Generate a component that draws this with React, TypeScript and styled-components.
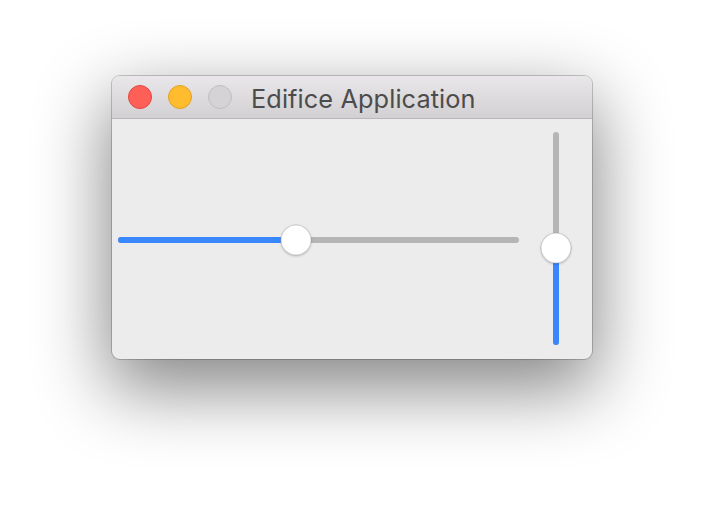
import React from "react";
import styled, { createGlobalStyle } from "styled-components";

const Global = createGlobalStyle`
  html, body { margin: 0; padding: 0; background: #ffffff; }
  body { width: 704px; height: 508px; overflow: hidden; font-family: "Inter", "Liberation Sans", sans-serif; }
`;

const Stage = styled.div`
  padding: 76px 0 0 112px;
`;

const Window = styled.div`
  width: 480px;
  height: 283px;
  border-radius: 8px;
  overflow: hidden;
  display: flex;
  flex-direction: column;
  background: #ececec;
  box-shadow: 0 0 0 1px rgba(0, 0, 0, 0.2), 0 26px 72px 4px rgba(0, 0, 0, 0.48);
`;

const TitleBar = styled.div`
  height: 42px;
  flex: none;
  display: flex;
  align-items: center;
  padding-left: 16px;
  gap: 16px;
  background: linear-gradient(#e9e7e9, #d2d0d2);
  border-bottom: 1px solid #b8b6b8;
`;

const Light = styled.div<{ $fill: string; $edge: string }>`
  width: 22px;
  height: 22px;
  border-radius: 50%;
  background: ${(p) => p.$fill};
  border: 1px solid ${(p) => p.$edge};
  flex: none;
`;

const Title = styled.div`
  margin-left: 3px;
  font-size: 25.3px;
  color: #4c4c4c;
  letter-spacing: 0.1px;
  line-height: 1;
  padding-top: 3px;
`;

const Content = styled.div`
  flex: 1;
  display: flex;
`;

const HArea = styled.div`
  flex: 1;
  display: flex;
  align-items: center;
  padding: 2px 0 0 6px;
`;

const VArea = styled.div`
  width: 73px;
  flex: none;
  display: flex;
  justify-content: center;
  padding: 13px 0 14px;
`;

const HTrack = styled.div`
  position: relative;
  flex: 1;
  height: 6px;
  border-radius: 3px;
  background: #b5b5b5;
`;

const VTrack = styled.div`
  position: relative;
  width: 6px;
  border-radius: 3px;
  background: #b5b5b5;
`;

const HFill = styled.div`
  position: absolute;
  left: 0;
  top: 0;
  bottom: 0;
  border-radius: 3px;
  background: #3a87fd;
`;

const VFill = styled.div`
  position: absolute;
  left: 0;
  right: 0;
  bottom: 0;
  border-radius: 3px;
  background: #3a87fd;
`;

const Thumb = styled.div`
  position: absolute;
  width: 29px;
  height: 29px;
  border-radius: 50%;
  background: #ffffff;
  border: 1px solid rgba(0, 0, 0, 0.2);
  box-shadow: 0 1px 2px rgba(0, 0, 0, 0.18);
  transform: translate(-50%, -50%);
`;

export default function App() {
  const hPos = 178; // px from track start
  const vPos = 97; // px from track bottom
  return (
    <>
      <Global />
      <Stage>
        <Window>
          <TitleBar>
            <Light $fill="#fe5f57" $edge="#e2463f" />
            <Light $fill="#febc2e" $edge="#e1a325" />
            <Light $fill="#d5d3d5" $edge="#c0bec0" />
            <Title>Edifice Application</Title>
          </TitleBar>
          <Content>
            <HArea>
              <HTrack>
                <HFill style={{ width: hPos }} />
                <Thumb style={{ left: hPos, top: 3 }} />
              </HTrack>
            </HArea>
            <VArea>
              <VTrack>
                <VFill style={{ height: vPos }} />
                <Thumb style={{ left: 3, top: `calc(100% - ${vPos}px)` }} />
              </VTrack>
            </VArea>
          </Content>
        </Window>
      </Stage>
    </>
  );
}
